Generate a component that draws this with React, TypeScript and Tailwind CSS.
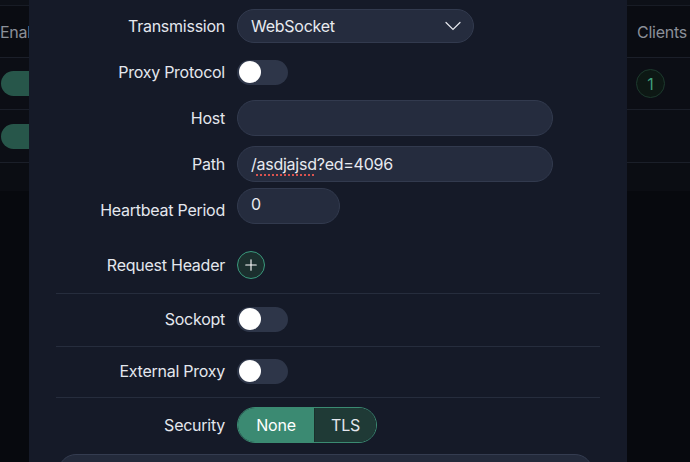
import { Plus } from "lucide-react";

const font = { fontFamily: "Inter, 'Liberation Sans', sans-serif" };

function Toggle() {
  return (
    <div className="flex h-[25px] w-[51px] items-center rounded-full bg-[#2e3649] pl-[2px]">
      <span className="size-[22px] rounded-full bg-white" />
    </div>
  );
}

function Row({ label, children, className = "", labelClass = "" }: { label: string; children: React.ReactNode; className?: string; labelClass?: string }) {
  return (
    <div className={`flex h-[36px] items-center ${className}`}>
      <div className={`w-[169px] shrink-0 text-right text-[16px] text-[#e4e7ee] ${labelClass}`}>{label}</div>
      <div className="ml-[12px] flex items-center">{children}</div>
    </div>
  );
}

function Backdrop() {
  return (
    <div className="flex h-full flex-col bg-[#07090e] text-[16px]">
      <div className="h-[5px] bg-[#0d1017]" />
      <div className="h-px bg-[#181c25]" />
      <div className="flex h-[51px] items-center bg-[#0a0c12] text-[#8b9099]">
        <span className="w-[628px]">Enable</span>
        <span className="pl-[9px]">Clients</span>
      </div>
      <div className="h-px bg-[#1b1f29]" />
      <div className="flex h-[51px] items-center bg-[#0c0e15]">
        <div className="w-[628px]">
          <span className="ml-px block h-[25px] w-[60px] rounded-full bg-[#27564a]" />
        </div>
        <span className="ml-[8px] flex size-[29px] items-center justify-center rounded-full border border-[#1d3a2e] bg-[#0d1814] text-[#3f9f7c]">1</span>
      </div>
      <div className="h-px bg-[#1b1f29]" />
      <div className="flex h-[52px] items-center bg-[#0c0e15]">
        <span className="ml-px block h-[25px] w-[60px] rounded-full bg-[#27564a]" />
      </div>
      <div className="h-px bg-[#1b1f29]" />
      <div className="h-[28px] bg-[#0b0d13]" />
    </div>
  );
}

export default function App() {
  return (
    <div className="relative h-[462px] w-[690px] overflow-hidden tracking-[-0.25px]" style={font}>
      <Backdrop />

      <div className="absolute left-[29px] top-0 h-full w-[598px] bg-[#151a28] px-[27px] pt-[8px]">
        <Row label="Transmission">
          <div className="flex h-[34px] w-[237px] items-center justify-between rounded-full border border-[#323a4e] bg-[#252c3e] pl-[13px] pr-[12px] text-[16px] text-[#e8eaf0]">
            <span>WebSocket</span>
            <svg width="16" height="10" viewBox="0 0 16 10" fill="none" stroke="#e8eaf0" strokeWidth="1.2" strokeLinecap="round">
              <polyline points="1,1.5 8,8.5 15,1.5" />
            </svg>
          </div>
        </Row>

        <Row label="Proxy Protocol" className="mt-[10px]">
          <Toggle />
        </Row>

        <Row label="Host" className="mt-[10px]">
          <div className="h-[36px] w-[316px] rounded-full border border-[#323a4e] bg-[#252c3e]" />
        </Row>

        <Row label="Path" className="mt-[10px]">
          <div className="flex h-[36px] w-[316px] items-center rounded-full border border-[#323a4e] bg-[#252c3e] pl-[13px] text-[16px] text-[#e8eaf0]">
            /<span className="underline decoration-[#d9534f] decoration-dotted decoration-[1.5px] underline-offset-[4px]">asdjajsd</span>?ed=4096
          </div>
        </Row>

        <Row label="Heartbeat Period" className="mt-[6px]" labelClass="pt-[8px]">
          <div className="flex h-[36px] w-[103px] items-center rounded-full border border-[#323a4e] bg-[#252c3e] pb-[4px] pl-[13px] text-[16px] text-[#e8eaf0]">
            0
          </div>
        </Row>

        <Row label="Request Header" className="mt-[23px]">
          <button className="flex size-[28px] items-center justify-center rounded-full border-[1.5px] border-[#3a9a7d] bg-[#1b2f2e] text-white">
            <Plus className="size-[18px]" strokeWidth={1.5} />
          </button>
        </Row>

        <div className="mt-[10px] h-px bg-[#262d3d]" />

        <Row label="Sockopt" className="mt-[7px]">
          <Toggle />
        </Row>

        <div className="mt-[9px] h-px bg-[#262d3d]" />

        <Row label="External Proxy" className="mt-[6px]">
          <Toggle />
        </Row>

        <div className="mt-[8px] h-px bg-[#262d3d]" />

        <Row label="Security" className="mt-[9px]">
          <div className="flex h-[36px] w-[140px] overflow-hidden rounded-full border border-[#3b8b72] text-[16px]">
            <span className="flex w-[76px] items-center justify-center bg-[#3b8a72] text-white">None</span>
            <span className="flex flex-1 items-center justify-center border-l border-[#1a302c] bg-[#1f3a36] text-[#e4e7ee]">TLS</span>
          </div>
        </Row>

        <div className="mx-[2px] mt-[11px] h-[40px] w-[535px] rounded-[18px] border border-[#343c50] bg-[#232a3b]" />
      </div>
    </div>
  );
}
